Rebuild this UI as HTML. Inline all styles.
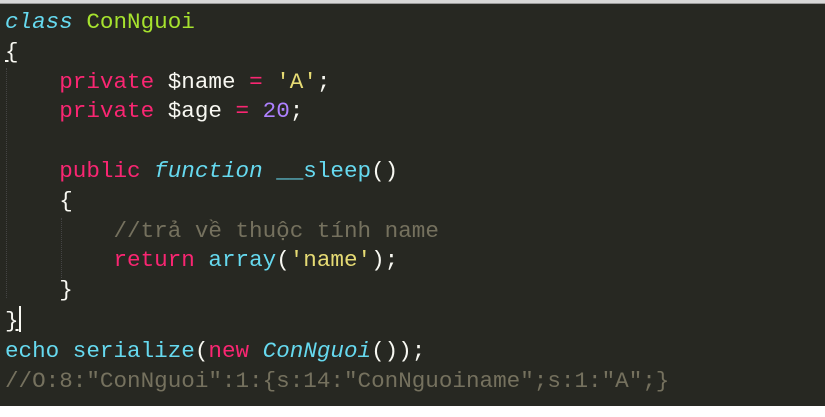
<!DOCTYPE html>
<html><head><style>
html,body{margin:0;padding:0;width:825px;height:417px;background:#fff;overflow:hidden}
#ed{position:absolute;left:0;top:3px;width:825px;height:402px;background:#272822;border-top:1px solid #999}
#top{position:absolute;left:0;top:0;width:825px;height:3px;background:#d8d8d8}
pre{position:absolute;left:5px;top:4px;margin:0;font-family:"Liberation Mono",monospace;font-size:22.6px;line-height:29.8px;color:#f8f8f2;white-space:pre}
.k{color:#f92672}.c{color:#66d9ef}.ci{color:#66d9ef;font-style:italic}.g{color:#a6e22e}.y{color:#e6db74}.p{color:#ae81ff}.m{color:#75715e}
.guide{position:absolute;width:0;border-left:1px dotted #444}
</style></head><body>
<div id="top"></div>
<div id="ed">
<div class="guide" style="left:6px;top:64px;height:230px"></div>
<div class="guide" style="left:61px;top:214px;height:60px"></div>
<pre><span class="ci">class</span> <span class="g">ConNguoi</span>
<span style="text-decoration:underline">{</span>
    <span class="k">private</span> $name <span class="k">=</span> <span class="y">'A'</span>;
    <span class="k">private</span> $age <span class="k">=</span> <span class="p">20</span>;

    <span class="k">public</span> <span class="ci">function</span> <span class="c">__sleep</span>()
    {
        <span class="m">//trả về thuộc tính name</span>
        <span class="k">return</span> <span class="c">array</span>(<span class="y">'name'</span>);
    }
<span style="text-decoration:underline">}</span><span style="display:inline-block;width:2px;height:26px;background:#f8f8f2;vertical-align:-5px"></span>
<span class="c">echo</span> <span class="c">serialize</span>(<span class="k">new</span> <span class="ci">ConNguoi</span>());
<span class="m">//O:8:"ConNguoi":1:{s:14:"ConNguoiname";s:1:"A";}</span></pre>
</div>
</body></html>
